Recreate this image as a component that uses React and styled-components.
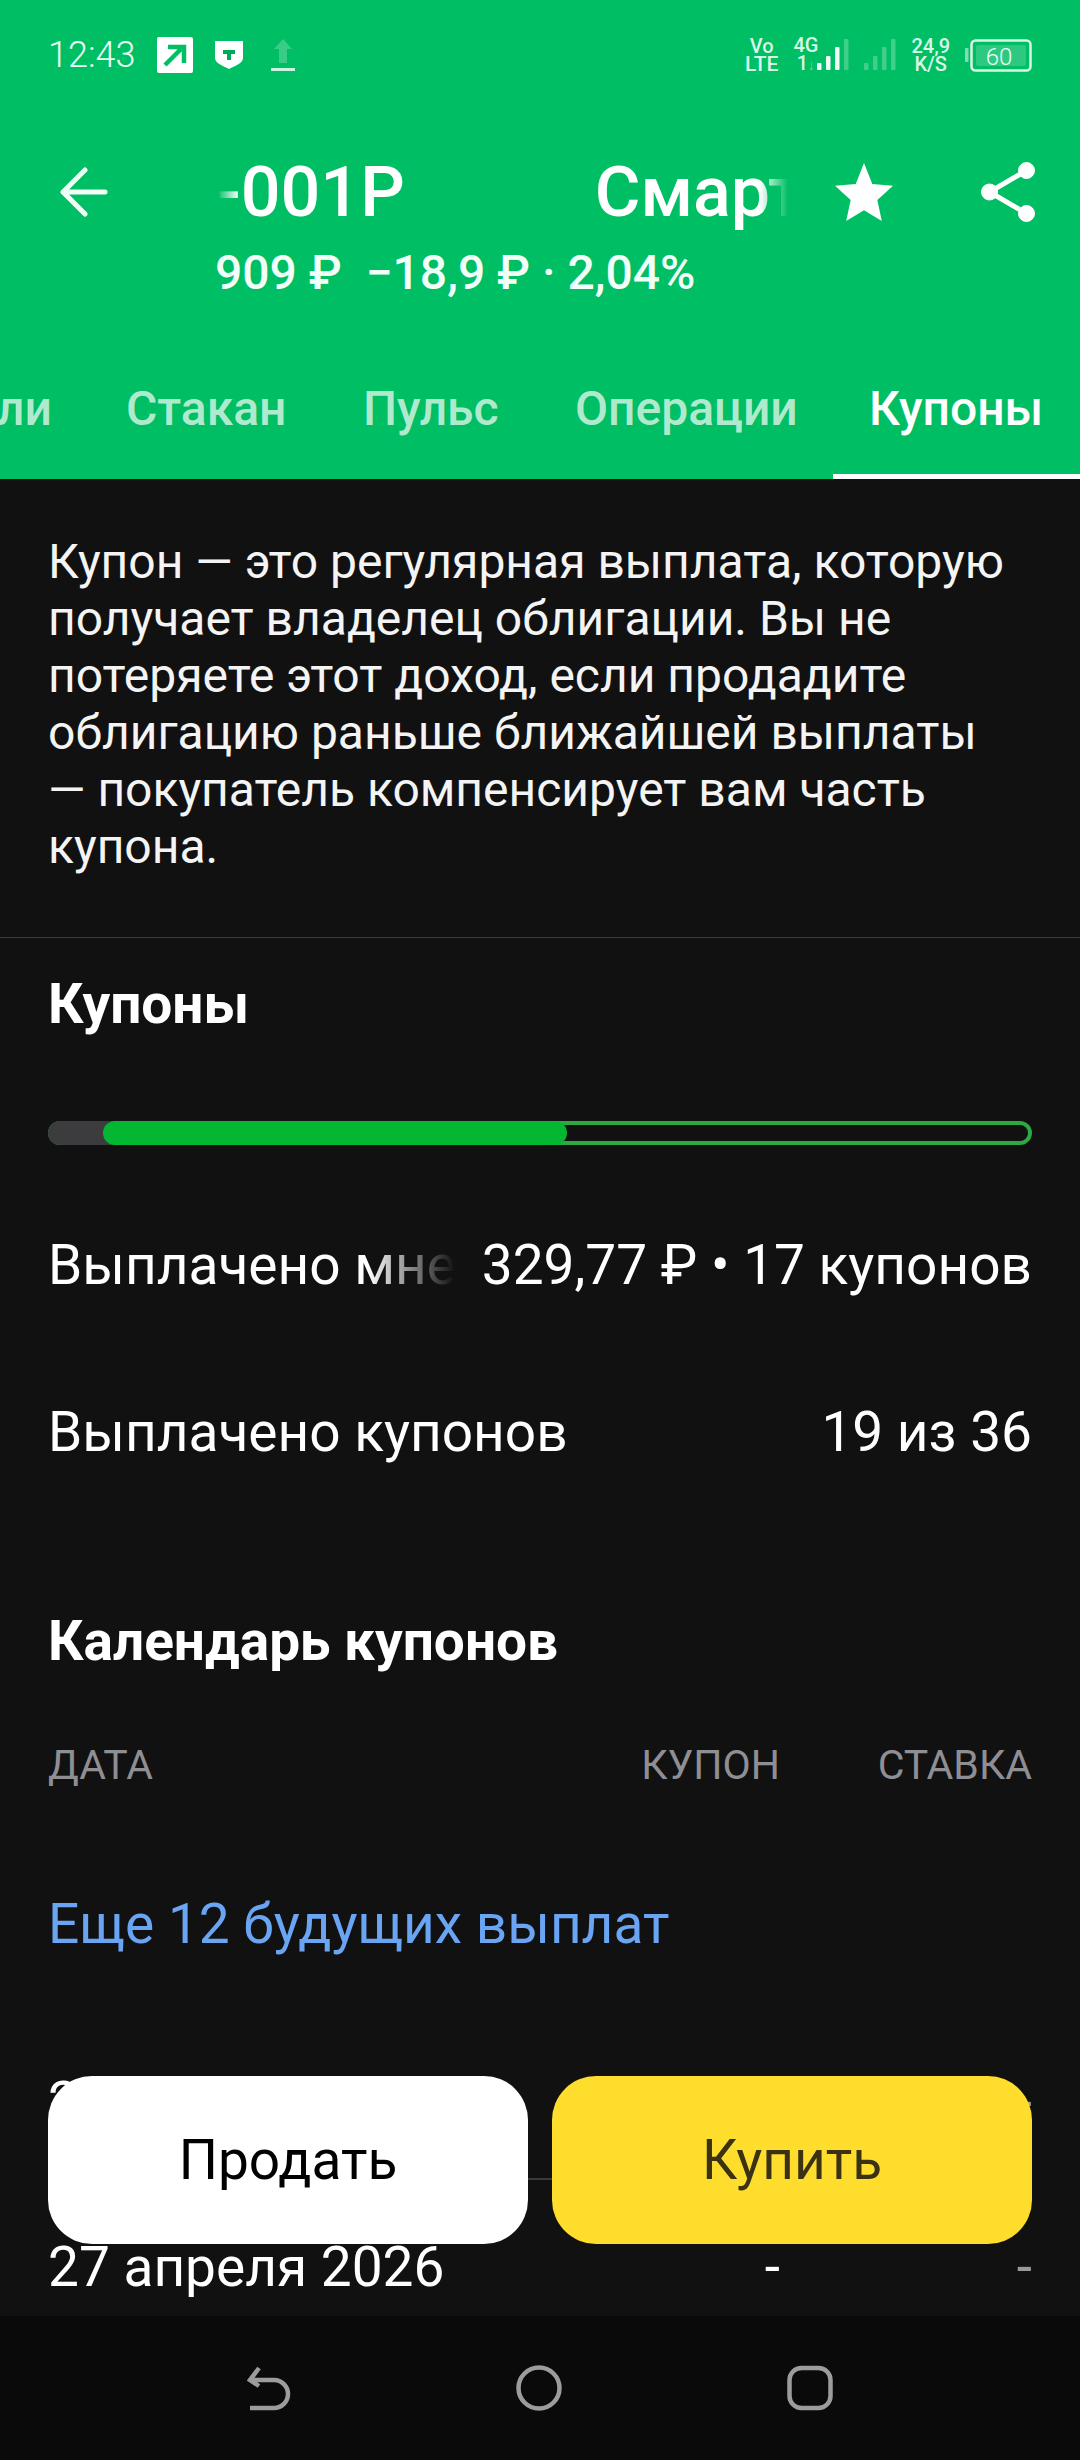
import React from "react";
import styled, { createGlobalStyle } from "styled-components";

const Global = createGlobalStyle`
  html, body { margin: 0; padding: 0; background: #111112; }
  * { box-sizing: border-box; }
`;

const Phone = styled.div`
  position: relative;
  width: 1080px;
  height: 2460px;
  overflow: hidden;
  background: #111112;
  font-family: Roboto, "Noto Sans", sans-serif;
  color: #fff;
  display: flex;
  flex-direction: column;
`;

const Header = styled.header`
  background: #00be64;
  height: 479px;
  flex: none;
  display: flex;
  flex-direction: column;
`;

const StatusBar = styled.div`
  height: 110px;
  padding: 28px 48px 0;
  display: flex;
  justify-content: space-between;
  align-items: flex-start;
`;

const StatusGroup = styled.div`
  display: flex;
  align-items: center;
  gap: ${(p) => p.$gap || 0}px;
  height: 54px;
`;

const Time = styled.span`
  font-size: 36px;
  font-weight: 300;
  color: #e9fff3;
`;

const TinyStack = styled.span`
  display: flex;
  flex-direction: column;
  align-items: center;
  font-size: 20px;
  font-weight: 500;
  line-height: 18px;
  color: #d8f8e6;
  margin-right: ${(p) => p.$mr || 0}px;
`;

const TinyLine = styled.span`
  font-size: ${(p) => p.$size || 20}px;
`;

const TinyArrow = styled.span`
  opacity: 0.4;
  font-size: 14px;
`;

const TitleRow = styled.div`
  display: flex;
  align-items: center;
  height: 70px;
  margin-top: 47px;
  padding: 0 45px 0 60px;
`;

const Marquee = styled.div`
  width: 572px;
  margin-left: 109px;
  display: flex;
  gap: 190px;
  font-size: 70px;
  font-weight: 500;
  white-space: nowrap;
  overflow: hidden;
  -webkit-mask-image: linear-gradient(90deg, transparent 0, #000 22px, #000 543px, transparent 571px);
  mask-image: linear-gradient(90deg, transparent 0, #000 22px, #000 543px, transparent 571px);
`;

const TitleIcons = styled.div`
  margin-left: auto;
  display: flex;
  align-items: center;
  gap: 87px;
`;

const Quote = styled.div`
  margin: 16px 0 0 215px;
  font-size: 48px;
  line-height: 60px;
  font-weight: 500;
  color: #f2fff8;
  white-space: nowrap;
`;

const Tabs = styled.nav`
  margin-top: auto;
  height: 100px;
  position: relative;
  overflow: hidden;
`;

const Tab = styled.span`
  position: absolute;
  left: ${(p) => p.$x}px;
  top: 4px;
  font-size: 48px;
  line-height: 52px;
  font-weight: 500;
  white-space: nowrap;
  color: ${(p) => (p.$active ? "#fff" : "rgba(255,255,255,.7)")};
`;

const Indicator = styled.span`
  position: absolute;
  left: 833px;
  right: 0;
  bottom: 0;
  height: 5px;
  background: #fff;
`;

const Intro = styled.p`
  margin: 0;
  padding: 54px 70px 0 48px;
  height: 459px;
  font-size: 48px;
  line-height: 57px;
  color: #f4f4f4;
  border-bottom: 1px solid #3a3a3c;
  flex: none;
`;

const Content = styled.main`
  padding: 0 48px;
  flex: 1;
`;

const SectionTitle = styled.h2`
  margin: ${(p) => p.$top}px 0 0;
  font-size: 55px;
  line-height: 56px;
  font-weight: 700;
  color: #fff;
`;

const Progress = styled.div`
  position: relative;
  margin-top: 89px;
  height: 24px;
  border-radius: 12px;
  background: #111112;
  border: 4px solid #2da842;
`;

const ProgressGrey = styled.span`
  position: absolute;
  left: -4px;
  top: -4px;
  width: 68px;
  height: 24px;
  border-radius: 12px 0 0 12px;
  background: #3c3c3e;
`;

const ProgressFill = styled.span`
  position: absolute;
  left: 51px;
  top: -4px;
  height: 24px;
  border-radius: 12px;
  background: #04b733;
`;

const InfoRow = styled.div`
  display: flex;
  justify-content: space-between;
  margin-top: ${(p) => p.$top}px;
  font-size: 55px;
  line-height: 60px;
  white-space: nowrap;
`;

const FadedLabel = styled.span`
  width: 408px;
  overflow: hidden;
  -webkit-mask-image: linear-gradient(90deg, #000 320px, transparent 407px);
  mask-image: linear-gradient(90deg, #000 320px, transparent 407px);
`;

const TableHead = styled.div`
  display: grid;
  grid-template-columns: 1fr 200px 252px;
  margin-top: 72px;
  font-size: 41px;
  line-height: 48px;
  color: #8e8e93;
  text-align: right;
`;

const HeadLeft = styled.span`
  text-align: left;
`;

const MoreLink = styled.div`
  margin-top: 105px;
  font-size: 55px;
  line-height: 60px;
  color: #6aa5f3;
`;

const TableRow = styled.div`
  display: grid;
  grid-template-columns: 1fr 200px 252px;
  align-items: center;
  height: 60px;
  margin-top: ${(p) => p.$top}px;
  font-size: 55px;
  text-align: right;
`;

const RowDivider = styled.div`
  height: 2px;
  margin-top: 48px;
  background: #3a3a3c;
`;

const DateCell = styled.span`
  text-align: left;
`;

const Rate = styled.span`
  color: #9a9a9e;
`;

const NavBar = styled.footer`
  position: absolute;
  left: 0;
  right: 0;
  bottom: 0;
  height: 144px;
  background: #0a0a0a;
  display: flex;
  justify-content: center;
  align-items: flex-start;
  padding-top: 49px;
  gap: 225px;
`;

const Actions = styled.div`
  position: absolute;
  left: 48px;
  right: 48px;
  top: 2076px;
  display: flex;
  gap: 24px;
`;

const ActionButton = styled.button`
  flex: 1;
  height: 168px;
  border: 0;
  border-radius: 44px;
  background: ${(p) => p.$bg};
  color: ${(p) => p.$fg};
  font-family: Roboto, sans-serif;
  font-size: 55px;
`;

const Arrow = () => (
  <svg width="48" height="50" viewBox="0 0 48 50" fill="none" stroke="#f2fff8" strokeWidth="5" strokeLinecap="round" strokeLinejoin="round">
    <path d="M3 25h42M25 3 3 25l22 22" />
  </svg>
);

const Star = () => (
  <svg width="60" height="58" viewBox="0 0 60 60" fill="#fff">
    <path d="M30 0l8.6 21.8L60 23.6 43.8 38.2 48.4 60 30 48.9 11.6 60l4.6-21.8L0 23.6l21.4-1.8z" />
  </svg>
);

const Share = () => (
  <svg width="54" height="60" viewBox="0 0 54 60" fill="#fff" stroke="#fff">
    <circle cx="45.5" cy="8.5" r="8" />
    <circle cx="8.5" cy="30" r="8" />
    <circle cx="45.5" cy="51.5" r="8" />
    <path d="M45.5 8.5 8.5 30l37 21.5" fill="none" strokeWidth="5" />
  </svg>
);

const ArrowSquare = () => (
  <svg width="36" height="36" viewBox="0 0 36 36">
    <rect width="36" height="36" rx="2" fill="#fff" />
    <path d="M8 28 24 12M11 10h16v16" fill="none" stroke="#00be64" strokeWidth="4.5" />
  </svg>
);

const TShield = () => (
  <svg width="28" height="28" viewBox="0 0 28 28">
    <path d="M0 0h28v17c0 5-8 8-14 11C8 25 0 22 0 17z" fill="#fff" />
    <path d="M8 9h12v4h-4v6h-4v-6H8z" fill="#00a956" />
  </svg>
);

const Upload = () => (
  <svg width="30" height="33" viewBox="0 0 30 33">
    <path d="M18 0l9 10h-5v14h-8V10H9z" fill="#fff" opacity=".22" />
    <rect x="6" y="29" width="24" height="3" fill="#fff" opacity=".8" />
  </svg>
);

const bars = [
  { x: 0, h: 7 },
  { x: 9, h: 14 },
  { x: 18, h: 23 },
];

const Signal = ({ faded }) => (
  <svg width="32" height="32" viewBox="0 0 32 32">
    {bars.map((b) => (
      <rect key={b.x} x={b.x} y={31 - b.h} width="4.5" height={b.h} rx="1" fill="#fff" opacity={faded ? 0.25 : 0.95} />
    ))}
    <rect x="27" y="0" width="4.5" height="31" rx="1" fill="#fff" opacity="0.25" />
  </svg>
);

const Battery = () => (
  <svg width="67" height="33" viewBox="0 0 67 33">
    <rect x="0" y="9" width="3.5" height="14" rx="1" fill="#fff" opacity=".5" />
    <rect x="6.5" y="1.5" width="59" height="30" rx="4" fill="none" stroke="#d8f8e6" strokeWidth="2.5" />
    <rect x="11" y="6" width="50" height="21" rx="2" fill="#fff" opacity=".18" />
    <text x="34" y="26" textAnchor="middle" fontFamily="Roboto" fontWeight="300" fontSize="24" fill="#e9fff3">60</text>
  </svg>
);

const NavBack = () => (
  <svg width="44" height="46" viewBox="0 0 44 46" fill="none" stroke="#9c9c9c" strokeWidth="4.5">
    <path d="M3 43h24a14 14 0 0 0 0-28H4M12 3 3 15l9 6" />
  </svg>
);

const NavHome = () => (
  <svg width="46" height="46" viewBox="0 0 46 46" fill="none" stroke="#9c9c9c" strokeWidth="4.5">
    <circle cx="23" cy="23" r="20.5" />
  </svg>
);

const NavRecents = () => (
  <svg width="46" height="46" viewBox="0 0 46 46" fill="none" stroke="#9c9c9c" strokeWidth="4.5">
    <rect x="2.5" y="3" width="41" height="40" rx="12" />
  </svg>
);

const tabs = [
  { x: -3, t: "ли" },
  { x: 126, t: "Стакан" },
  { x: 363, t: "Пульс" },
  { x: 575, t: "Операции" },
  { x: 869, t: "Купоны", active: true },
];

export default function App() {
  return (
    <Phone>
      <Global />
      <Header>
        <StatusBar>
          <StatusGroup $gap={22}>
            <Time>12:43</Time>
            <ArrowSquare />
            <TShield />
            <Upload />
          </StatusGroup>
          <StatusGroup $gap={15}>
            <TinyStack>
              <span>Vo</span>
              <TinyLine $size={21}>LTE</TinyLine>
            </TinyStack>
            <TinyStack $mr={-16}>
              <span>4G</span>
              <span>1<TinyArrow>↓</TinyArrow></span>
            </TinyStack>
            <Signal />
            <Signal faded />
            <TinyStack>
              <span>24,9</span>
              <span>K/S</span>
            </TinyStack>
            <Battery />
          </StatusGroup>
        </StatusBar>
        <TitleRow>
          <Arrow />
          <Marquee>
            <span>-001P</span>
            <span>Смарт</span>
          </Marquee>
          <TitleIcons>
            <Star />
            <Share />
          </TitleIcons>
        </TitleRow>
        <Quote>909 ₽&nbsp; −18,9 ₽ · 2,04%</Quote>
        <Tabs>
          {tabs.map((tab) => (
            <Tab key={tab.t} $x={tab.x} $active={tab.active}>
              {tab.t}
            </Tab>
          ))}
          <Indicator />
        </Tabs>
      </Header>
      <Intro>
        Купон — это регулярная выплата, которую получает владелец облигации. Вы не потеряете этот доход, если продадите облигацию раньше ближайшей выплаты — покупатель компенсирует вам часть купона.
      </Intro>
      <Content>
        <SectionTitle $top={38}>Купоны</SectionTitle>
        <Progress>
          <ProgressGrey />
          <ProgressFill style={{ width: "464px" }} />
        </Progress>
        <InfoRow $top={90}>
          <FadedLabel>Выплачено мне</FadedLabel>
          <span>329,77 ₽ • 17 купонов</span>
        </InfoRow>
        <InfoRow $top={107}>
          <span>Выплачено купонов</span>
          <span>19 из 36</span>
        </InfoRow>
        <SectionTitle $top={151}>Календарь купонов</SectionTitle>
        <TableHead>
          <HeadLeft>ДАТА</HeadLeft>
          <span>КУПОН</span>
          <span>СТАВКА</span>
        </TableHead>
        <MoreLink>Еще 12 будущих выплат</MoreLink>
        <TableRow $top={116}>
          <DateCell>27 марта 2026</DateCell>
          <span>-</span>
          <Rate>-</Rate>
        </TableRow>
        <RowDivider />
        <TableRow $top={55}>
          <DateCell>27 апреля 2026</DateCell>
          <span>-</span>
          <Rate>-</Rate>
        </TableRow>
      </Content>
      <Actions>
        <ActionButton $bg="#fff" $fg="#000">Продать</ActionButton>
        <ActionButton $bg="#ffdd2d" $fg="#3a3213">Купить</ActionButton>
      </Actions>
      <NavBar>
        <NavBack />
        <NavHome />
        <NavRecents />
      </NavBar>
    </Phone>
  );
}
